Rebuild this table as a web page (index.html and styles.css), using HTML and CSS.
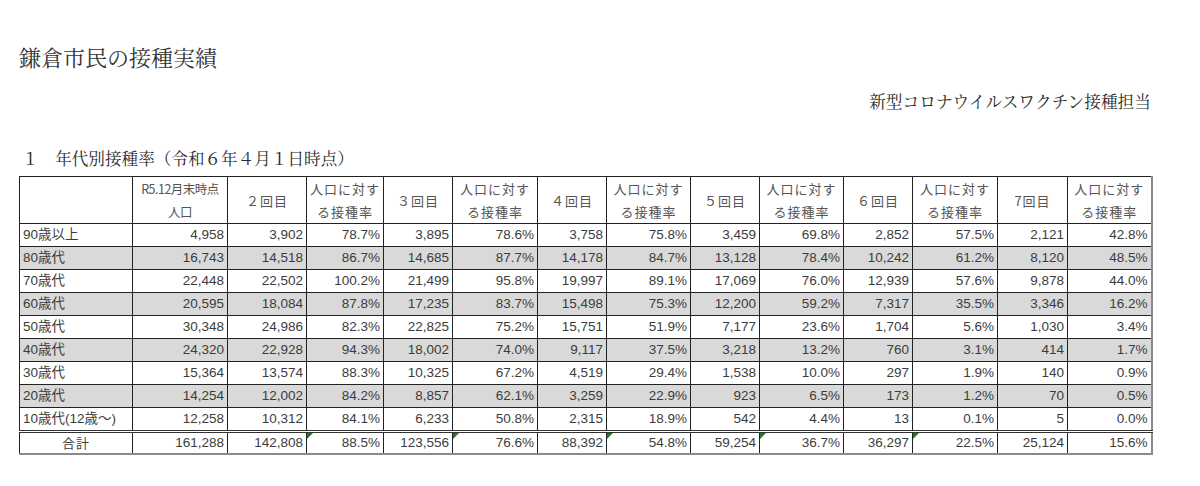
FILE: index.html
```html
<!DOCTYPE html>
<html lang="ja">
<head>
<meta charset="utf-8">
<title>鎌倉市民の接種実績</title>
<link rel="stylesheet" href="styles.css">
</head>
<body>
<div class="page">
  <h1 class="title">鎌倉市民の接種実績</h1>
  <p class="dept">新型コロナウイルスワクチン接種担当</p>
  <h2 class="section">１　年代別接種率（令和６年４月１日時点）</h2>
  <table class="rates">
    <colgroup>
      <col class="c-age"><col class="c-pop"><col class="c-n"><col class="c-r0"><col class="c-n2"><col class="c-r2"><col class="c-n2"><col class="c-r"><col class="c-n2"><col class="c-r"><col class="c-n2"><col class="c-r2"><col class="c-n3"><col class="c-r">
    </colgroup>
    <thead>
      <tr>
        <th></th>
        <th class="narrow">R5.12月末時点<br>人口</th>
        <th>２回目</th>
        <th>人口に対す<br>る接種率</th>
        <th>３回目</th>
        <th>人口に対す<br>る接種率</th>
        <th>４回目</th>
        <th>人口に対す<br>る接種率</th>
        <th>５回目</th>
        <th>人口に対す<br>る接種率</th>
        <th>６回目</th>
        <th>人口に対す<br>る接種率</th>
        <th>7回目</th>
        <th>人口に対す<br>る接種率</th>
      </tr>
    </thead>
    <tbody>
      <tr><td class="age">90歳以上</td><td>4,958</td><td>3,902</td><td>78.7%</td><td>3,895</td><td>78.6%</td><td>3,758</td><td>75.8%</td><td>3,459</td><td>69.8%</td><td>2,852</td><td>57.5%</td><td>2,121</td><td>42.8%</td></tr>
      <tr class="shade"><td class="age">80歳代</td><td>16,743</td><td>14,518</td><td>86.7%</td><td>14,685</td><td>87.7%</td><td>14,178</td><td>84.7%</td><td>13,128</td><td>78.4%</td><td>10,242</td><td>61.2%</td><td>8,120</td><td>48.5%</td></tr>
      <tr><td class="age">70歳代</td><td>22,448</td><td>22,502</td><td>100.2%</td><td>21,499</td><td>95.8%</td><td>19,997</td><td>89.1%</td><td>17,069</td><td>76.0%</td><td>12,939</td><td>57.6%</td><td>9,878</td><td>44.0%</td></tr>
      <tr class="shade"><td class="age">60歳代</td><td>20,595</td><td>18,084</td><td>87.8%</td><td>17,235</td><td>83.7%</td><td>15,498</td><td>75.3%</td><td>12,200</td><td>59.2%</td><td>7,317</td><td>35.5%</td><td>3,346</td><td>16.2%</td></tr>
      <tr><td class="age">50歳代</td><td>30,348</td><td>24,986</td><td>82.3%</td><td>22,825</td><td>75.2%</td><td>15,751</td><td>51.9%</td><td>7,177</td><td>23.6%</td><td>1,704</td><td>5.6%</td><td>1,030</td><td>3.4%</td></tr>
      <tr class="shade"><td class="age">40歳代</td><td>24,320</td><td>22,928</td><td>94.3%</td><td>18,002</td><td>74.0%</td><td>9,117</td><td>37.5%</td><td>3,218</td><td>13.2%</td><td>760</td><td>3.1%</td><td>414</td><td>1.7%</td></tr>
      <tr><td class="age">30歳代</td><td>15,364</td><td>13,574</td><td>88.3%</td><td>10,325</td><td>67.2%</td><td>4,519</td><td>29.4%</td><td>1,538</td><td>10.0%</td><td>297</td><td>1.9%</td><td>140</td><td>0.9%</td></tr>
      <tr class="shade"><td class="age">20歳代</td><td>14,254</td><td>12,002</td><td>84.2%</td><td>8,857</td><td>62.1%</td><td>3,259</td><td>22.9%</td><td>923</td><td>6.5%</td><td>173</td><td>1.2%</td><td>70</td><td>0.5%</td></tr>
      <tr><td class="age">10歳代(12歳～)</td><td>12,258</td><td>10,312</td><td>84.1%</td><td>6,233</td><td>50.8%</td><td>2,315</td><td>18.9%</td><td>542</td><td>4.4%</td><td>13</td><td>0.1%</td><td>5</td><td>0.0%</td></tr>
    </tbody>
    <tfoot>
      <tr><td class="total-label">合計</td><td>161,288</td><td>142,808</td><td class="flag">88.5%</td><td>123,556</td><td class="flag">76.6%</td><td>88,392</td><td class="flag">54.8%</td><td>59,254</td><td class="flag">36.7%</td><td>36,297</td><td class="flag">22.5%</td><td>25,124</td><td>15.6%</td></tr>
    </tfoot>
  </table>
</div>
</body>
</html>
```

FILE: styles.css
```css
html, body {
  margin: 0;
  padding: 0;
  background: #ffffff;
}

.page {
  width: 1133px;
  padding: 42px 0 0 19px;
  color: #333333;
  font-family: "Noto Serif CJK JP", "Noto Sans CJK JP", serif;
}

.title {
  margin: 0;
  font-size: 22px;
  font-weight: 400;
  line-height: 30px;
  color: #333333;
}

.dept {
  margin: 17px 0 0 0;
  text-align: right;
  font-size: 16.7px;
  line-height: 24px;
  padding-right: 1px;
  color: #2a2a2a;
}

.section {
  margin: 33px 0 0 3px;
  font-size: 16.6px;
  font-weight: 400;
  line-height: 24px;
  color: #2a2a2a;
}

.rates {
  margin-top: 6px;
  border-collapse: collapse;
  table-layout: fixed;
  width: 1133px;
  font-family: "Liberation Sans", "Noto Sans CJK JP", sans-serif;
  font-size: 13.5px;
  color: #3c3c3c;
  border-right: 2px solid #8a8a8a;
  border-bottom: 2px solid #8a8a8a;
}

.c-age { width: 113px; }
.c-pop { width: 95px; }
.c-n { width: 79px; }
.c-r0 { width: 77px; }
.c-r { width: 84px; }
.c-r2 { width: 85px; }
.c-n2 { width: 69px; }
.c-n3 { width: 70px; }

.rates th,
.rates td {
  border: 1px solid #222222;
  padding: 0 3px;
  white-space: nowrap;
  overflow: hidden;
}

.rates th {
  height: 45px;
  font-weight: 400;
  font-size: 13px;
  letter-spacing: 1px;
  line-height: 23px;
  text-align: center;
  vertical-align: middle;
  font-family: "Noto Sans CJK JP", sans-serif;
  color: #555555;
}

.rates th.narrow {
  font-size: 12.5px;
  letter-spacing: -0.5px;
}

.rates td {
  height: 22px;
  line-height: 22px;
  text-align: right;
}

.rates td.age {
  text-align: left;
  padding-left: 3px;
}

.rates tr.shade td {
  background: #d9d9d9;
}

.rates tfoot td {
  border-top: 3px double #333333;
  height: 20px;
  line-height: 20px;
}

.rates td.total-label {
  text-align: center;
  font-family: "Noto Sans CJK JP", sans-serif;
  font-size: 13px;
  letter-spacing: 1px;
}

.rates td.flag {
  position: relative;
}

.rates td.flag::before {
  content: "";
  position: absolute;
  left: 0;
  top: 0;
  width: 0;
  height: 0;
  border-top: 6px solid #1f7a24;
  border-right: 6px solid transparent;
}
```
